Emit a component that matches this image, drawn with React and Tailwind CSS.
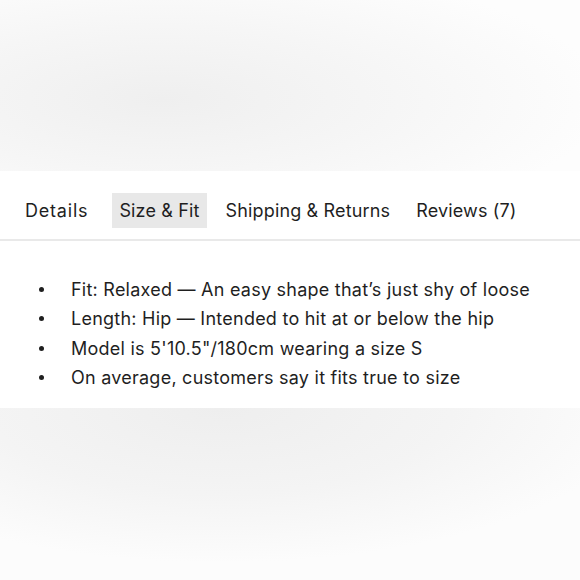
import React from 'react';

const TABS = ['Details', 'Size & Fit', 'Shipping & Returns', 'Reviews (7)'];

const FIT_NOTES = [
  'Fit: Relaxed — An easy shape that’s just shy of loose',
  'Length: Hip — Intended to hit at or below the hip',
  'Model is 5\'10.5"/180cm wearing a size S',
  'On average, customers say it fits true to size',
];

export default function App() {
  return (
    <div
      className="w-[580px] h-[580px] flex flex-col bg-white text-[#1f1f1f] overflow-hidden"
      style={{ fontFamily: 'Inter, "Noto Sans", sans-serif' }}
    >
      <div className="h-[171px] shrink-0 bg-[radial-gradient(ellipse_90%_95%_at_28%_58%,#efefef_0%,#f6f6f6_45%,#fdfdfd_85%)]" />

      <div className="bg-white shrink-0">
        <div className="flex items-center pt-[22px] pl-[18px] border-b-2 border-[#e9e9e9] pb-[11px]">
          {TABS.map((tab, i) => (
            <button
              key={tab}
              type="button"
              className={`h-[35px] px-[7px] text-[18px] leading-none ${
                i === 0 ? 'mr-[17px] tracking-[0.8px]' : 'mr-[12px] tracking-[0.15px]'
              } ${tab === 'Size & Fit' ? 'bg-[#e8e8e8]' : ''}`}
            >
              {tab}
            </button>
          ))}
        </div>

        <ul className="pt-[34px] pb-[16px] pl-[39px] list-none">
          {FIT_NOTES.map((note) => (
            <li key={note} className="flex items-center h-[29.33px] text-[18px] tracking-[0.24px]">
              <span className="w-[5px] h-[5px] rounded-full bg-[#1f1f1f] mr-[27px]" />
              {note}
            </li>
          ))}
        </ul>
      </div>

      <div className="flex-1 bg-[radial-gradient(ellipse_80%_100%_at_38%_0%,#eeeeee_0%,#f4f4f4_50%,#fcfcfc_90%)]" />
    </div>
  );
}
